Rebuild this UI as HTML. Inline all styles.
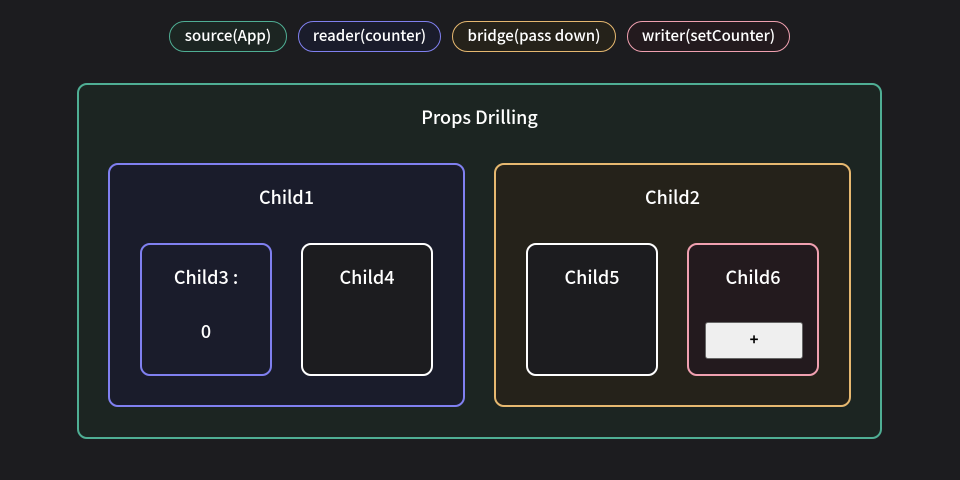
<!DOCTYPE html>
<html><head><style>
*{box-sizing:border-box;margin:0;padding:0}
body{width:960px;height:480px;background:#1c1c1f;font-family:"Noto Sans CJK KR","Liberation Sans",sans-serif;font-weight:500;color:#fff;position:relative;overflow:hidden}
.p{position:absolute;top:21px;height:31px;border:1.5px solid;border-radius:16px;font-size:15px;line-height:27px;text-align:center}
.b{position:absolute;border:2px solid;border-radius:10px}
.t{position:absolute;left:0;right:0;text-align:center;font-size:18px;line-height:24px}
</style></head><body>
<div class="p" style="left:169px;width:118px;border-color:#4fae94;background:#1c2522">source(App)</div>
<div class="p" style="left:298px;width:143px;border-color:#8080f0;background:#1a1c2b">reader(counter)</div>
<div class="p" style="left:452px;width:164px;border-color:#e6b870;background:#25221a">bridge(pass down)</div>
<div class="p" style="left:627px;width:163px;border-color:#f0a0b0;background:#231a1e">writer(setCounter)</div>

<div class="b" style="left:77px;top:83px;width:805px;height:356px;border-color:#4fae94;background:#1c2522">
 <div class="t" style="top:20px">Props Drilling</div>
</div>
<div class="b" style="left:108px;top:163px;width:357px;height:244px;border-color:#8080f0;background:#1a1c2b">
 <div class="t" style="top:20px">Child1</div>
</div>
<div class="b" style="left:494px;top:163px;width:357px;height:244px;border-color:#e6b870;background:#25221a">
 <div class="t" style="top:20px">Child2</div>
</div>
<div class="b" style="left:140px;top:243px;width:132px;height:133px;border-color:#8080f0;background:#1a1c2b">
 <div class="t" style="top:20px">Child3 :</div>
 <div class="t" style="top:74px">0</div>
</div>
<div class="b" style="left:301px;top:243px;width:132px;height:133px;border-color:#fff;background:#1c1c1f">
 <div class="t" style="top:20px">Child4</div>
</div>
<div class="b" style="left:526px;top:243px;width:132px;height:133px;border-color:#fff;background:#1c1c1f">
 <div class="t" style="top:20px">Child5</div>
</div>
<div class="b" style="left:687px;top:243px;width:132px;height:133px;border-color:#f0a0b0;background:#231a1e">
 <div class="t" style="top:20px">Child6</div>
 <div style="position:absolute;left:16px;top:77px;width:98px;height:37px;background:#efefef;border:1px solid #666;border-radius:3px;color:#000;text-align:center;line-height:33px;font-size:15px;font-weight:bold">+</div>
</div>
</body></html>
